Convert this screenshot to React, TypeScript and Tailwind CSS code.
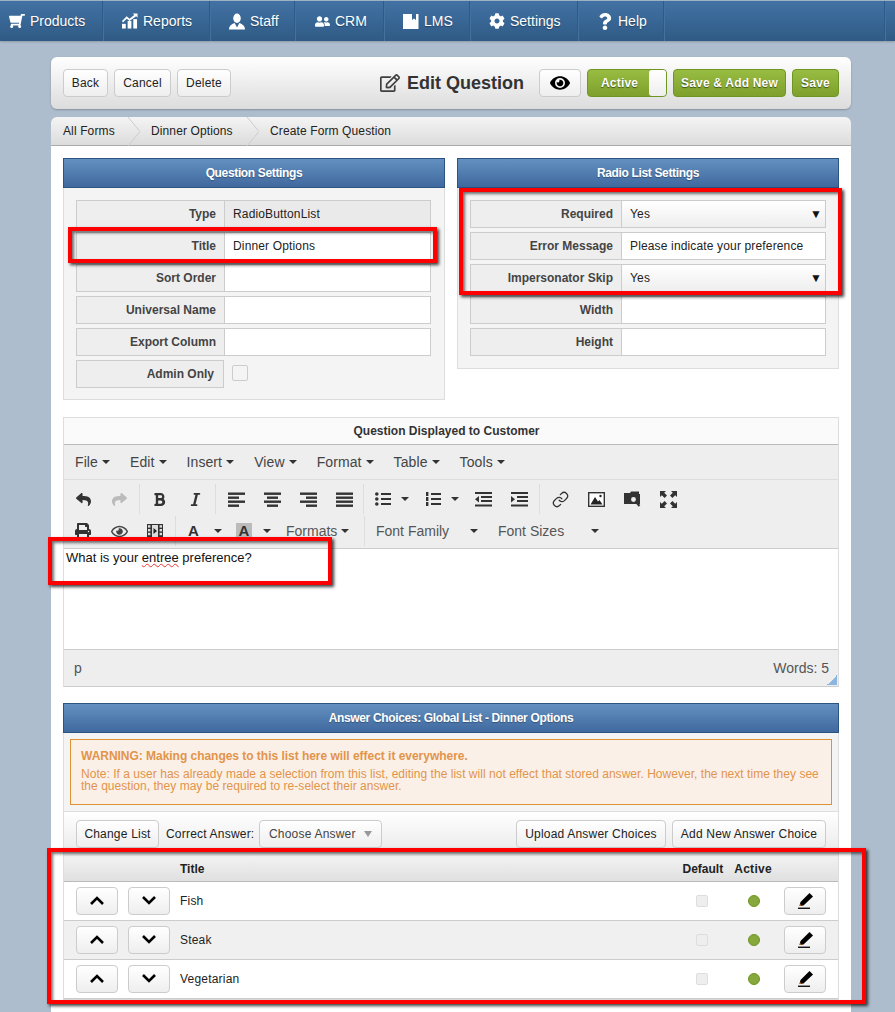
import React from "react";
import { FaShoppingCart, FaUserFriends, FaCog, FaQuestion, FaEye, FaRegEye, FaRegEdit, FaReply, FaShare, FaBold, FaItalic, FaPrint } from "react-icons/fa";
import { Link as LinkIcon } from "lucide-react";

const navGrad = "bg-[linear-gradient(#4272a4,#2f5a85)]";

function ReportsIcon() {
  return (
    <svg width="17" height="16" viewBox="0 0 17 16" fill="#fff">
      <rect x="0" y="11" width="4" height="5" />
      <rect x="6" y="8" width="4" height="8" />
      <rect x="12" y="6" width="4" height="10" />
      <path d="M0 8 L5 3 L8 5.5 L13 1.5 L11.5 0 L16.5 0 L16.5 4.5 L15 3 L8 8 L5 5.5 L1 9.5 Z" />
    </svg>
  );
}
function StaffIcon() {
  return (
    <svg width="17" height="17" viewBox="0 0 17 17" fill="#fff">
      <ellipse cx="8.5" cy="5" rx="4" ry="5" />
      <path d="M0 17 C0 12 4 11 6 10 L8.5 15 L11 10 C13 11 17 12 17 17 Z" />
    </svg>
  );
}
function LmsIcon() {
  return (
    <svg width="16" height="16" viewBox="0 0 16 16">
      <path fill="#fff" d="M0 1 H9 V7 L11 5.5 L13 7 V1 H15.5 V16 H0 Z" />
    </svg>
  );
}
function Lines({ kind }: { kind: "l" | "c" | "r" | "j" }) {
  const short = { l: [0, 11], c: [3, 11], r: [6, 11], j: [0, 17] }[kind];
  const ys = [0, 4, 8, 12];
  return (
    <svg width="17" height="15" viewBox="0 0 17 15" fill="#333">
      {ys.map((y, i) => (
        <rect key={y} x={i % 2 ? short[0] : 0} y={y + 0.5} width={i % 2 ? short[1] : 17} height="2.4" />
      ))}
    </svg>
  );
}
function ListIcon({ num }: { num?: boolean }) {
  return (
    <svg width="16" height="15" viewBox="0 0 16 15" fill="#333">
      {[1, 6, 11].map((y) => (
        <React.Fragment key={y}>
          {num ? <rect x="1" y={y - 1} width="2.4" height="4" /> : <circle cx="1.8" cy={y + 1} r="1.8" />}
          <rect x="6" y={y} width="10" height="2" />
        </React.Fragment>
      ))}
    </svg>
  );
}
function IndentIcon({ out }: { out?: boolean }) {
  return (
    <svg width="17" height="15" viewBox="0 0 17 15" fill="#333">
      <rect x="0" y="0" width="17" height="2" />
      <rect x="6" y="4" width="11" height="2" />
      <rect x="6" y="8" width="11" height="2" />
      <rect x="0" y="12.5" width="17" height="2" />
      {out ? <path d="M4 4 V10.5 L0 7.2 Z" /> : <path d="M0 4 V10.5 L4 7.2 Z" />}
    </svg>
  );
}
function ImageIcon() {
  return (
    <svg width="17" height="15" viewBox="0 0 17 15">
      <rect x="0.7" y="0.7" width="15.6" height="13.6" fill="#fff" stroke="#333" strokeWidth="1.4" />
      <path d="M2.5 12.5 L7 5 L10 9.5 L11.5 8 L14.5 12.5 Z" fill="#222" />
      <circle cx="12.5" cy="4" r="1.2" fill="#222" />
    </svg>
  );
}
function FolderSearchIcon() {
  return (
    <svg width="17" height="17" viewBox="0 0 17 17">
      <path d="M0 2 H6 L7 0.5 H15 V3 H16 V13 H0 Z" fill="#333" />
      <circle cx="9.5" cy="8.5" r="3.2" fill="#eee" stroke="#333" strokeWidth="1.5" />
      <path d="M12 11 L15.5 15" stroke="#333" strokeWidth="2" />
    </svg>
  );
}
function FullscreenIcon() {
  return (
    <svg width="17" height="17" viewBox="0 0 17 17" fill="#333">
      <path d="M0 0 H6 L4.2 1.8 L7 4.6 L4.6 7 L1.8 4.2 L0 6 Z" />
      <path d="M17 0 H11 L12.8 1.8 L10 4.6 L12.4 7 L15.2 4.2 L17 6 Z" />
      <path d="M0 17 H6 L4.2 15.2 L7 12.4 L4.6 10 L1.8 12.8 L0 11 Z" />
      <path d="M17 17 H11 L12.8 15.2 L10 12.4 L12.4 10 L15.2 12.8 L17 11 Z" />
    </svg>
  );
}
function FilmIcon() {
  return (
    <svg width="16" height="14" viewBox="0 0 16 14">
      <rect width="16" height="14" fill="#333" />
      <rect x="5" y="1" width="6" height="12" fill="#ddd" />
      <path d="M6.5 4 L10 7 L6.5 10 Z" fill="#222" />
      {[1.2, 5, 8.8].map((y) => (
        <React.Fragment key={y}>
          <rect x="1" y={y} width="2.4" height="2.4" fill="#ddd" />
          <rect x="12.6" y={y} width="2.4" height="2.4" fill="#ddd" />
        </React.Fragment>
      ))}
    </svg>
  );
}
function PencilLine() {
  return (
    <svg width="15" height="16" viewBox="0 0 15 16">
      <path d="M11.5 0 L15 3.5 L5.5 12.5 L1.5 13 L2.5 9 Z" fill="#000" />
      <path d="M1.5 13 L3.5 12.5 L2 11 Z" fill="#e07b1a" />
      <rect x="0" y="14.6" width="12" height="1.3" fill="#000" />
    </svg>
  );
}
function Chevron({ up }: { up?: boolean }) {
  return (
    <svg width="14" height="9" viewBox="0 0 14 9" fill="none" className="-mt-[2px]">
      <path d={up ? "M1 8 L7 2 L13 8" : "M1 1 L7 7 L13 1"} stroke="#000" strokeWidth="2.6" />
    </svg>
  );
}

function Caret({ cls = "" }: { cls?: string }) {
  return <span className={`inline-block w-0 h-0 border-l-[4px] border-r-[4px] border-t-[4px] border-l-transparent border-r-transparent border-t-[#333] ${cls}`} />;
}

function NavItem({ icon, label, cls }: { icon: React.ReactNode; label: string; cls: string }) {
  return (
    <div className={`flex items-center h-full border-r border-r-[#2f5a87] shadow-[1px_0_0_#44729f] ${cls}`}>
      <span className="flex justify-center w-[16px] mr-[5px]">{icon}</span>
      <span className="text-[14px] text-white [text-shadow:0_1px_1px_rgba(0,0,0,0.35)]">{label}</span>
    </div>
  );
}

function Btn({ children, cls = "" }: { children: React.ReactNode; cls?: string }) {
  return (
    <div className={`flex items-center justify-center h-[28px] rounded-[4px] border border-[#ccc] bg-[linear-gradient(#fff,#eee)] text-[12px] tracking-[0.2px] text-[#222] ${cls}`}>
      {children}
    </div>
  );
}
function GreenBtn({ children, cls = "" }: { children: React.ReactNode; cls?: string }) {
  return (
    <div className={`flex items-center justify-center h-[28px] rounded-[4px] border border-[#6f9523] bg-[linear-gradient(#98bd42,#7ea02c)] text-[12px] font-bold text-white tracking-[0.2px] [text-shadow:0_1px_1px_rgba(0,0,0,0.55)] ${cls}`}>
      {children}
    </div>
  );
}

function PanelHead({ title }: { title: string }) {
  return (
    <div className="flex items-center justify-center h-[30px] border border-[#2c5480] bg-[linear-gradient(#6390c0,#40699f)] text-[12px] font-bold tracking-[-0.35px] text-white [text-shadow:0_1px_1px_rgba(0,0,0,0.3)]">
      {title}
    </div>
  );
}

function Row({ label, value, select, labelW, bg = "bg-white" }: { label: string; value?: string; select?: boolean; labelW: string; bg?: string }) {
  return (
    <div className="flex h-[28px] mb-[4px] text-[12px]">
      <div className={`flex items-center justify-end pr-[8px] border border-[#ccc] bg-[#eee] font-bold text-[#444] ${labelW}`}>{label}</div>
      <div className={`flex-1 flex items-center justify-between pl-[8px] pr-[3px] border border-l-0 border-[#ccc] tracking-[0.15px] text-[#222] ${select ? "bg-[linear-gradient(#fff,#eee)]" : bg}`}>
        <span>{value}</span>
        {select && <span className="text-[12px] text-[#111]">▼</span>}
      </div>
    </div>
  );
}

function Tool({ children, cls = "w-[36px]" }: { children: React.ReactNode; cls?: string }) {
  return <div className={`flex items-center justify-center h-[32px] shrink-0 ${cls}`}>{children}</div>;
}
function Sep({ cls }: { cls: string }) {
  return (
    <div className={`flex justify-center h-[30px] shrink-0 ${cls}`}>
      <div className="w-px h-full bg-[#ddd]" />
    </div>
  );
}

function Menu({ label }: { label: string }) {
  return (
    <span className="flex items-center mr-[20px] text-[14px] tracking-[0.1px] text-[#444]">
      {label}
      <Caret cls="ml-[4px]" />
    </span>
  );
}

function Crumb() {
  return (
    <svg width="12" height="29" viewBox="0 0 12 29" className="shrink-0" fill="none">
      <path d="M0 0 L12 14.5 L0 29" stroke="#ccc" />
    </svg>
  );
}

function AnswerRow({ title, shaded }: { title: string; shaded?: boolean }) {
  return (
    <div className={`flex items-center h-[39px] border-b border-[#ccc] pl-[12px] text-[12px] tracking-[0.2px] text-[#222] ${shaded ? "bg-[#f0f0f0]" : "bg-white"}`}>
      <Btn cls="w-[42px] mr-[10px]"><Chevron up /></Btn>
      <Btn cls="w-[42px] mr-[10px]"><Chevron /></Btn>
      <span className="flex-1">{title}</span>
      <span className="w-[12px] h-[12px] mr-[40px] rounded-[2px] border border-[#ddd] bg-[#eee]" />
      <span className="w-[12px] h-[12px] mr-[24px] rounded-full border border-[#6f9523] bg-[#86a83c]" />
      <Btn cls="w-[42px] mr-[12px]"><PencilLine /></Btn>
    </div>
  );
}

function RedBox({ cls }: { cls: string }) {
  return <div className={`absolute border-[4px] border-[#fe0000] shadow-[2px_2px_3px_rgba(0,0,0,0.75),inset_2px_2px_3px_rgba(0,0,0,0.55)] pointer-events-none ${cls}`} />;
}

export default function App() {
  return (
    <div className="relative w-[895px] h-[1012px] overflow-hidden bg-[#aebdcd] font-['Liberation_Sans',Arial,sans-serif]">
      <div className={`flex h-[41px] border-t border-t-[#9db0c4] shadow-[0_1px_2px_rgba(0,0,0,0.2)] ${navGrad}`}>
        <NavItem cls="w-[103px] pl-[9px]" icon={<FaShoppingCart size={16} color="#fff" className="-scale-x-100" />} label="Products" />
        <NavItem cls="w-[107px] pl-[19px]" icon={<ReportsIcon />} label="Reports" />
        <NavItem cls="w-[85px] pl-[19px]" icon={<StaffIcon />} label="Staff" />
        <NavItem cls="w-[89px] pl-[19px]" icon={<FaUserFriends size={15} color="#fff" />} label="CRM" />
        <NavItem cls="w-[86px] pl-[19px]" icon={<LmsIcon />} label="LMS" />
        <NavItem cls="w-[108px] pl-[19px]" icon={<FaCog size={16} color="#fff" />} label="Settings" />
        <NavItem cls="w-[86px] pl-[19px]" icon={<FaQuestion size={17} color="#fff" />} label="Help" />
        <div className="w-[221px] h-full border-r border-r-[#2f5a87] shadow-[1px_0_0_#44729f]" />
      </div>

      <div className="ml-[51px] w-[800px] mt-[16px]">
        <div className="flex items-center justify-between h-[52px] px-[12px] rounded-[6px] bg-[linear-gradient(#fff,#dcdcdc)] shadow-[0_1px_2px_rgba(0,0,0,0.25)]">
          <div className="flex gap-[6px]">
            <Btn cls="w-[45px]">Back</Btn>
            <Btn cls="w-[57px]">Cancel</Btn>
            <Btn cls="w-[54px]">Delete</Btn>
          </div>
          <div className="flex items-center">
            <FaRegEdit size={20} color="#3f3f3f" className="mr-[7px]" />
            <span className="mr-[15px] text-[18px] font-bold text-[#333]">Edit Question</span>
            <Btn cls="w-[42px] mr-[6px]"><FaEye size={20} color="#000" /></Btn>
            <GreenBtn cls="w-[80px] mr-[6px] !justify-between pl-[13px] pr-[0px]">
              <span>Active</span>
              <span className="w-[17px] h-[26px] rounded-[3px] bg-[linear-gradient(#fff,#eee)]" />
            </GreenBtn>
            <GreenBtn cls="w-[113px] mr-[6px]">Save &amp; Add New</GreenBtn>
            <GreenBtn cls="w-[47px]">Save</GreenBtn>
          </div>
        </div>

        <div className="flex items-center h-[29px] mt-[8px] pl-[12px] rounded-t-[6px] border-b border-b-[#aaa] bg-[linear-gradient(#f4f4f4,#dcdcdc)] text-[12px] tracking-[0.12px] text-[#222]">
          <span className="w-[65px]">All Forms</span>
          <Crumb />
          <span className="ml-[11px] w-[96px]">Dinner Options</span>
          <Crumb />
          <span className="ml-[11px]">Create Form Question</span>
        </div>

        <div className="bg-white h-[870px] px-[12px] pt-[12px]">
          <div className="flex items-start gap-[12px]">
            <div className="w-[382px]">
              <PanelHead title="Question Settings" />
              <div className="h-[212px] pt-[12px] pl-[12px] pr-[13px] border border-t-0 border-[#ddd] bg-[#f4f4f4]">
                <Row labelW="w-[149px]" label="Type" value="RadioButtonList" bg="bg-[#eaeaea]" />
                <Row labelW="w-[149px]" label="Title" value="Dinner Options" />
                <Row labelW="w-[149px]" label="Sort Order" />
                <Row labelW="w-[149px]" label="Universal Name" />
                <Row labelW="w-[149px]" label="Export Column" />
                <div className="flex h-[28px] text-[12px]">
                  <div className="flex items-center justify-end w-[148px] pr-[9px] border border-[#ccc] bg-[#eee] font-bold text-[#444]">Admin Only</div>
                  <span className="w-[16px] h-[16px] ml-[8px] mt-[5px] rounded-[2px] border border-[#ccc] bg-[#f4f4f4]" />
                </div>
              </div>
            </div>
            <div className="w-[382px]">
              <PanelHead title="Radio List Settings" />
              <div className="h-[181px] pt-[12px] pl-[12px] pr-[12px] border border-t-0 border-[#ddd] bg-[#f4f4f4]">
                <Row labelW="w-[152px]" label="Required" value="Yes" select />
                <Row labelW="w-[152px]" label="Error Message" value="Please indicate your preference" />
                <Row labelW="w-[152px]" label="Impersonator Skip" value="Yes" select />
                <Row labelW="w-[152px]" label="Width" />
                <Row labelW="w-[152px]" label="Height" />
              </div>
            </div>
          </div>

          <div className="mt-[17px] border border-[#ddd] border-b-[#ccc]">
            <div className="flex items-center justify-center h-[27px] pr-[9px] bg-[#fafafa] border-b border-b-[#bbb] text-[12px] font-bold text-[#333]">Question Displayed to Customer</div>
            <div className="flex items-center h-[35px] pl-[11px] bg-[#eee] border-b border-b-[#ddd]">
              {["File", "Edit", "Insert", "View", "Format", "Table", "Tools"].map((m) => <Menu key={m} label={m} />)}
            </div>
            <div className="h-[69px] bg-[#eee] border-b border-b-[#ccc] pt-[3px] pl-[1px]">
              <div className="flex items-center h-[32px]">
                <Tool><FaReply size={15} color="#333" /></Tool>
                <Tool><FaShare size={15} color="#bbb" /></Tool>
                <Sep cls="w-[4px]" />
                <Tool><FaBold size={15} color="#333" /></Tool>
                <Tool><FaItalic size={15} color="#333" /></Tool>
                <Sep cls="w-[5px]" />
                <Tool><Lines kind="l" /></Tool>
                <Tool><Lines kind="c" /></Tool>
                <Tool><Lines kind="r" /></Tool>
                <Tool><Lines kind="j" /></Tool>
                <Sep cls="w-[3px]" />
                <Tool cls="w-[50px] !justify-start pl-[10px]"><ListIcon /><Caret cls="ml-[10px]" /></Tool>
                <Tool cls="w-[50px] !justify-start pl-[10px]"><ListIcon num /><Caret cls="ml-[10px]" /></Tool>
                <Tool><IndentIcon out /></Tool>
                <Tool><IndentIcon /></Tool>
                <Sep cls="w-[5px]" />
                <Tool><LinkIcon size={17} color="#333" strokeWidth={1.8} /></Tool>
                <Tool><ImageIcon /></Tool>
                <Tool><FolderSearchIcon /></Tool>
                <Tool><FullscreenIcon /></Tool>
              </div>
              <div className="flex items-center h-[32px]">
                <Tool><FaPrint size={16} color="#333" /></Tool>
                <Tool><FaRegEye size={17} color="#444" /></Tool>
                <Tool><FilmIcon /></Tool>
                <Sep cls="w-[5px]" />
                <Tool cls="w-[54px] !justify-start pl-[10px]">
                  <span className="text-[15px] font-bold text-[#333]">A</span><Caret cls="ml-[15px]" />
                </Tool>
                <Tool cls="w-[54px] !justify-start pl-[4px]">
                  <span className="flex items-center justify-center w-[16px] h-[16px] bg-[#bbb] text-[15px] font-bold text-[#333]">A</span><Caret cls="ml-[11px]" />
                </Tool>
                <span className="flex items-center w-[77px] text-[14px] text-[#555]">Formats<Caret cls="ml-[4px]" /></span>
                <Sep cls="w-[2px]" />
                <span className="flex items-center w-[133px] pl-[11px] text-[14px] text-[#555]">Font Family<Caret cls="ml-[21px]" /></span>
                <span className="flex items-center text-[14px] text-[#555]">Font Sizes<Caret cls="ml-[27px]" /></span>
              </div>
            </div>
            <div className="h-[100px] px-[2px] pt-[1px] text-[13px] leading-[16px] text-[#111]">
              What is your <span className="underline decoration-wavy decoration-[#e33] decoration-1">entree</span> preference?
            </div>
            <div className="relative flex items-center justify-between h-[37px] pl-[10px] pr-[9px] bg-[#eee] border-t border-t-[#ccc] text-[14px] text-[#555]">
              <span>p</span>
              <span>Words: 5</span>
              <svg width="10" height="10" viewBox="0 0 10 10" className="absolute right-[1px] bottom-[1px]" fill="#8ab6e0">
                <path d="M9 0 H10 V10 H0 V9 H2 V8 H3 V7 H4 V6 H5 V5 H6 V4 H7 V3 H8 V2 H9 Z" />
              </svg>
            </div>
          </div>

          <div className="mt-[16px]">
            <PanelHead title="Answer Choices: Global List - Dinner Options" />
            <div className="border-x border-b border-[#ddd]">
              <div className="bg-[#f4f4f4] px-[6px] pt-[6px] pb-[6px] border-b border-b-[#ddd]">
                <div className="h-[66px] px-[10px] pt-[9px] border border-[#dd9233] bg-[#faf0e8] text-[#e2944a]">
                  <div className="text-[12px] font-bold leading-[15px] tracking-[-0.03px]">WARNING: Making changes to this list here will effect it everywhere.</div>
                  <div className="mt-[4px] text-[12px] leading-[12px] tracking-[0.03px]">Note: If a user has already made a selection from this list, editing the list will not effect that stored answer. However, the next time they see the question, they may be required to re-select their answer.</div>
                </div>
              </div>
              <div className="flex items-center justify-between h-[44px] px-[12px] bg-[linear-gradient(#fff,#e8e8e8)] text-[12px] tracking-[0.2px] text-[#222]">
                <div className="flex items-center">
                  <Btn cls="w-[83px]">Change List</Btn>
                  <span className="ml-[7px] w-[93px]">Correct Answer:</span>
                  <div className="flex items-center justify-between w-[123px] h-[28px] pl-[9px] pr-[9px] rounded-[4px] border border-[#ccc] bg-[linear-gradient(#fff,#eee)] text-[#444]">
                    Choose Answer
                    <span className="w-0 h-0 border-l-[4px] border-r-[4px] border-t-[6px] border-l-transparent border-r-transparent border-t-[#999]" />
                  </div>
                </div>
                <div className="flex gap-[6px]">
                  <Btn cls="w-[150px]">Upload Answer Choices</Btn>
                  <Btn cls="w-[154px]">Add New Answer Choice</Btn>
                </div>
              </div>
              <div className="flex items-center h-[26px] pl-[116px] border-b border-b-[#bbb] bg-[linear-gradient(#f2f2f2,#e0e0e0)] text-[12px] font-bold text-[#222]">
                <span className="flex-1">Title</span>
                <span className="mr-[11px]">Default</span>
                <span className="mr-[66px] tracking-[0.3px]">Active</span>
              </div>
              <AnswerRow title="Fish" />
              <AnswerRow title="Steak" shaded />
              <AnswerRow title="Vegetarian" />
            </div>
          </div>
        </div>
      </div>

      <RedBox cls="left-[68px] top-[227px] w-[369px] h-[36px]" />
      <RedBox cls="left-[459px] top-[188px] w-[383px] h-[107px]" />
      <RedBox cls="left-[48px] top-[537px] w-[284px] h-[48px]" />
      <RedBox cls="left-[47px] top-[848px] w-[819px] h-[156px]" />
    </div>
  );
}
